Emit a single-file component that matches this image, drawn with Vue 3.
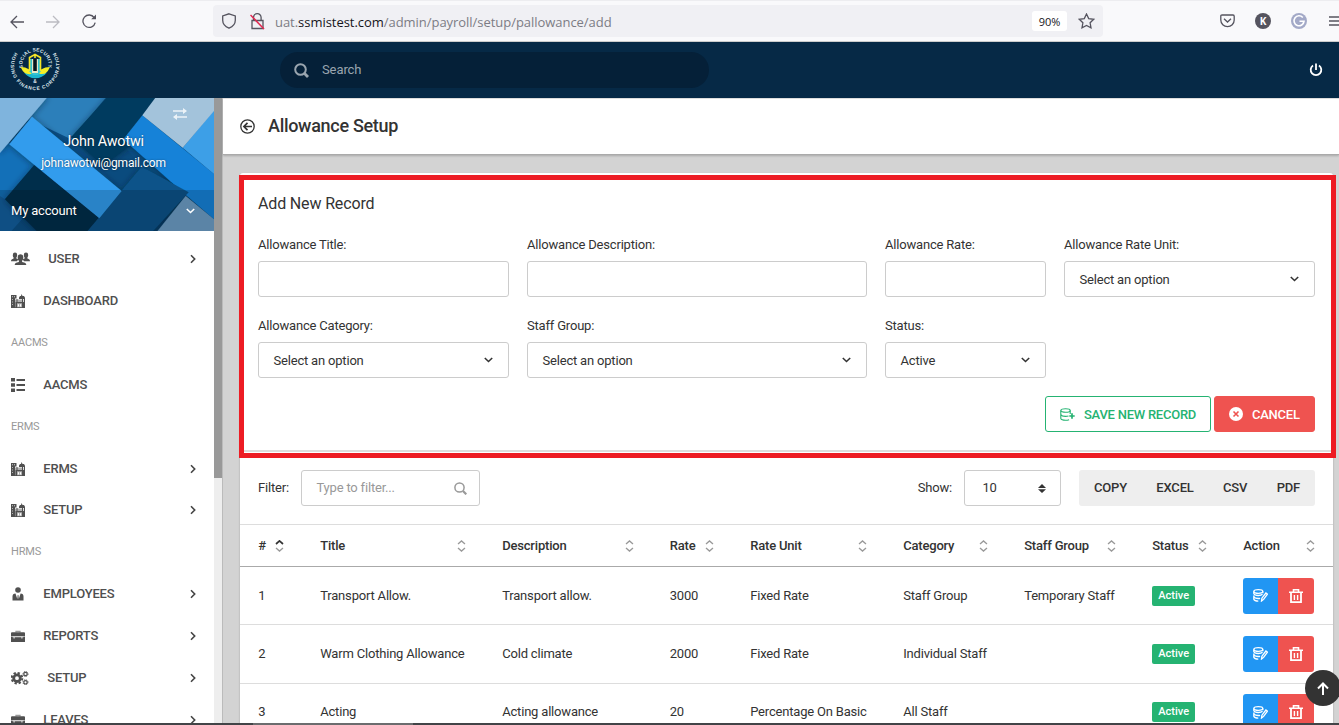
<script setup>
const nav = [
  { label: 'USER', icon: 'users', w: 20, arrow: true },
  { label: 'DASHBOARD', icon: 'city', w: 14 },
  { header: 'AACMS' },
  { label: 'AACMS', icon: 'list', w: 14 },
  { header: 'ERMS' },
  { label: 'ERMS', icon: 'city', w: 14, arrow: true },
  { label: 'SETUP', icon: 'city', w: 14, arrow: true },
  { header: 'HRMS' },
  { label: 'EMPLOYEES', icon: 'tie', w: 14, arrow: true },
  { label: 'REPORTS', icon: 'case', w: 14, arrow: true },
  { label: 'SETUP', icon: 'cogs', w: 18, arrow: true },
  { label: 'LEAVES', icon: 'case', w: 14, arrow: true },
]
const fields = [
  { label: 'Allowance Title:' },
  { label: 'Allowance Description:' },
  { label: 'Allowance Rate:' },
  { label: 'Allowance Rate Unit:', value: 'Select an option' },
  { label: 'Allowance Category:', value: 'Select an option' },
  { label: 'Staff Group:', value: 'Select an option' },
  { label: 'Status:', value: 'Active' },
]
const columns = ['#', 'Title', 'Description', 'Rate', 'Rate Unit', 'Category', 'Staff Group', 'Status', 'Action']
const rows = [
  ['1', 'Transport Allow.', 'Transport allow.', '3000', 'Fixed Rate', 'Staff Group', 'Temporary Staff'],
  ['2', 'Warm Clothing Allowance', 'Cold climate', '2000', 'Fixed Rate', 'Individual Staff', ''],
  ['3', 'Acting', 'Acting allowance', '20', 'Percentage On Basic', 'All Staff', ''],
]
</script>

<template>
  <div class="screen">
    <header class="browser">
      <div class="controls">
        <svg width="14" height="14" viewBox="0 0 14 14" class="line"><path d="M14 7H1M7 1 1 7l6 6" /></svg>
        <svg width="14" height="14" viewBox="0 0 14 14" class="line faded"><path d="M0 7h13M7 1l6 6-6 6" /></svg>
        <svg width="15" height="15" viewBox="0 0 15 15" class="line"><path d="M13.2 8.600A6.200 6.200 0 1 1 12.200 3.600" /><path d="M14 .5V5.300H9.200z" class="solid" /></svg>
      </div>
      <div class="address">
        <svg width="14" height="16" viewBox="0 0 14 16" class="line shield"><path d="M7 .8 13.300 3v4.200c0 3.600-2.600 6.400-6.300 8C3.300 13.600.7 10.800.7 7.200V3z" /></svg>
        <svg width="15" height="17" viewBox="0 0 15 17" class="line lock"><path d="M3.500 7.500V4.500a3.800 3.800 0 0 1 7.600 0v3M2 7.500h11v8H2z" /><path d="M.5 2 14 16" class="slash" /></svg>
        <span class="url">uat.<b>ssmistest.com</b>/admin/payroll/setup/pallowance/add</span>
        <span class="zoom">90%</span>
        <svg width="17" height="16" viewBox="0 0 17 16" class="line star"><path d="M8.500 1l2.200 4.600 5 .7-3.600 3.500.9 5-4.500-2.400L4 14.800l.9-5L1.300 6.300l5-.7z" /></svg>
      </div>
      <div class="addons">
        <svg width="15" height="14" viewBox="0 0 15 14" class="line pocket"><path d="M2 1h11q1.200 0 1.200 1.200V6A6.700 6.700 0 0 1 .8 6V2.200Q.8 1 2 1zM4 4.800l3.500 3.200L11 4.800" /></svg>
        <span class="avatar">K</span>
        <svg width="16" height="16" viewBox="0 0 16 16" class="grammar"><circle cx="8" cy="8" r="8" /><path d="M11.800 4.500A5 5 0 1 0 13 8.300H8.500M13 8.300l-1.200 3" /></svg>
        <svg width="14" height="12" viewBox="0 0 14 12" class="line burger"><path d="M0 2h14M0 6h14M0 10h14" /></svg>
      </div>
    </header>

    <div class="topbar">
      <svg class="logo" width="52" height="48" viewBox="9 44 52 48">
        <defs>
          <path id="ringOuter" d="M15.500 51.500A24.300 24.300 0 1 0 54.800 51.500" />
          <path id="ringInner" d="M23 68A13 13 0 1 1 48 68" />
        </defs>
        <text class="ring"><textPath href="#ringOuter" textLength="104" startOffset="1">HOUSING FINANCE CORPORATION</textPath></text>
        <text class="ring"><textPath href="#ringInner" textLength="47" startOffset="0">SOCIAL SECURITY</textPath></text>
        <path d="M20.500 67q10 0 13.500 8.500Q25 77 20.500 67zM50 67q-10 0-14 8.500Q46 77 50 67z" fill="#f5ee26" />
        <path d="M24 72.500q5 3 8 1l3 1.500 4-1.500q4 1.500 8-1-4.500 5.800-12 5.800-6.500 0-11-5.800z" fill="#1cb5cf" />
        <path d="M29 59h12v12l-3 4h-5l-4-4z" fill="#35c3d4" />
        <path d="M29.500 71V57.500l5.500-3 5.500 3V71M35 54v4" fill="none" stroke="#f5e527" stroke-width="1.600" />
        <path d="M32 59h6v14h-6z" fill="#e6e6c8" /><path d="M33.200 59h3.600v12h-3.600z" fill="#08151f" />
        <text x="33.300" y="83" class="ring">&amp;</text>
      </svg>
      <div class="search">
        <svg width="15" height="15" viewBox="0 0 15 15"><circle cx="6.500" cy="6.500" r="5.300" fill="none" stroke="currentColor" stroke-width="2" /><path d="M10.300 10.300 14 14" stroke="currentColor" stroke-width="2.800" /></svg>
        <span>Search</span>
      </div>
      <svg class="power" width="14" height="14" viewBox="0 0 14 14"><path d="M4 2.500a5.300 5.300 0 1 0 6 0M7 .5v6.500" fill="none" stroke="currentColor" stroke-width="1.800" /></svg>
    </div>

    <div class="body">
      <aside class="sidebar">
        <div class="profile">
          <svg class="backdrop" width="214" height="133" viewBox="0 6 642 399" preserveAspectRatio="none">
            <defs><filter id="soft" x="-20%" y="-20%" width="140%" height="140%"><feDropShadow dx="0" dy="2" stdDeviation="9" flood-color="#001a30" flood-opacity=".55" /></filter></defs>
            <path fill="#0b4f85" d="M0 0h642v410H0z" />
            <path fill="#2c7fba" d="M120-10h210L213 130l-125-60z" />
            <path fill="#1370b8" d="M0 120l110 80L10 315 0 320z" />
            <path fill="#125f9e" d="M0 300l15 10 55 55-40 45H0z" />
            <path fill="#0a4b7e" d="M213 120l150 20 70 80-68 70z" />
            <g filter="url(#soft)">
              <path fill="#063a5f" d="M325 0h150L372 130l18 20-80 60-97-86z" />
              <path fill="#052d4c" d="M102 208L15 310l110 110h240z" />
              <path fill="#1382d8" d="M427 58l215 176v136l-87-75-185-165z" />
              <path fill="#3d9fe7" d="M642 43v191l-94-79z" />
              <path fill="#a3c3db" d="M470 0h172v45l-94 110-121-97z" />
              <path fill="#0a5389" d="M425 212l141 77-115 125H255z" />
              <path fill="#6d9ec6" d="M557 300l85 70v45H465z" />
              <path fill="#339ced" d="M96 62l269 223-67 82L28 145z" />
              <path fill="#7fb4dd" d="M-5 0h150L0 171z" />
            </g>
          </svg>
          <svg class="swap" width="14" height="12" viewBox="0 0 14 12"><path d="M0 3h11M14 9H3" stroke="currentColor" stroke-width="1.700" /><path d="M10 0l4 3-4 3zM4 6 0 9l4 3z" fill="currentColor" /></svg>
          <div class="name">John Awotwi</div>
          <div class="mail">johnawotwi@gmail.com</div>
          <div class="account"><span>My account</span><svg width="9" height="6" viewBox="0 0 9 6" class="chev"><path d="M.8 1l3.700 3.500L8.200 1" /></svg></div>
        </div>
        <nav>
          <div v-for="(n, i) in nav" :key="i" class="item" :class="{ heading: n.header }">
            <template v-if="n.header">{{ n.header }}</template>
            <template v-else>
              <svg v-if="n.icon === 'users'" class="ico" width="19" height="14" viewBox="0 0 19 14"><path d="M1.800 3a2.200 2.400 0 0 1 4.400 0c0 1.300-.4 2-.8 2.500v1l2 .9-1.500 1.800H0c0-1.700 1-2.200 2.600-2.700v-1C2 5 1.800 4.200 1.800 3zM12.800 3a2.200 2.400 0 0 1 4.400 0c0 1.300-.4 2-.8 2.500v1c1.700.5 2.600 1 2.600 2.700h-5.900l-1.500-1.800 2-.9v-1c-.5-.5-.8-1.300-.8-2.500z" /><path d="M6.700 5.400a2.800 3.200 0 0 1 5.600 0c0 1.800-.6 2.800-1.200 3.400v1.100c3 .5 4.200 1.300 4.200 3.100H3.700c0-1.800 1.200-2.600 4.200-3.100V8.800c-.7-.6-1.200-1.600-1.200-3.400z" /></svg>
              <svg v-else-if="n.icon === 'city'" class="ico" width="14" height="14" viewBox="0 0 14 14"><path d="M0 1h5.500v3.500H4V14H0z" /><path d="M1 2.300h1v1H1zM3 2.300h1v1H3zM1 5h.8v1H1zM1 7.500h.8v1H1zM1 10h.8v1H1z" fill="#ccc" /><path d="M8 3.500 9 2h1l.6-2 .9 2h1.500l1 1.700V14h-1V5H8z" /><path d="M4 5.500h8.500V14H4z" opacity=".45" /><path d="M5.500 5h1v3h4.500V5h1v3h1v6h-2V9.200H6V14H4.500V8h1z" /><path d="M7 10.300h1v2.200H7zM9 10.300h1v2.200H9z" fill="#fff" /><path d="M4 13.200h10v.8H4z" /></svg>
              <svg v-else-if="n.icon === 'list'" class="ico" width="14" height="14" viewBox="0 0 14 14"><path d="M0 0h4v3.500H0zM0 5.200h4v3.500H0zM0 10.500h4V14H0zM5.500 1H14v2H5.500zM5.500 6H14v2H5.500zM5.500 11H14v2H5.500z" /></svg>
              <svg v-else-if="n.icon === 'tie'" class="ico" width="14" height="14" viewBox="0 0 14 14"><circle cx="7" cy="3" r="2.800" /><path d="M4.500 6.500 6.300 12l.4-4h.7l.4 4 1.800-5.500q2.900.2 2.900 3V13.500h-11V9.500q0-2.800 3-3z" /></svg>
              <svg v-else-if="n.icon === 'case'" class="ico" width="14" height="14" viewBox="0 0 14 14"><path d="M5 3.500V2.300h4v1.200" fill="none" stroke="#999" stroke-width="1.300" /><path d="M1 3.300h12q1 0 1 1V7.600H0V4.300q0-1 1-1zM0 8h14v5H0z" /><path d="M1.500 7.300h11v1h-1v1.200h-1.200V8.300H3.700v1.200H2.500V8.300h-1z" fill="#ddd" /></svg>
              <svg v-else class="ico" width="18" height="14" viewBox="0 0 18 14"><circle cx="6" cy="7.200" r="3.300" fill="none" stroke="#505050" stroke-width="2.800" /><circle cx="6" cy="7.200" r="5.300" fill="none" stroke="#505050" stroke-width="2" stroke-dasharray="2.300 1.860" /><g fill="none" stroke="#505050"><circle cx="14.500" cy="3" r="1.700" stroke-width="1.200" /><circle cx="14.500" cy="3" r="2.500" stroke-width="1" stroke-dasharray="1.100 .86" /><circle cx="14.500" cy="11.300" r="1.700" stroke-width="1.200" /><circle cx="14.500" cy="11.300" r="2.500" stroke-width="1" stroke-dasharray="1.100 .86" /></g></svg>
              <span class="label">{{ n.label }}</span>
              <svg v-if="n.arrow" width="6" height="10" viewBox="0 0 6 10" class="chev"><path d="M1 1.300 4.700 5 1 8.700" /></svg>
            </template>
          </div>
        </nav>
      </aside>
      <div class="rail"><div class="thumb"></div></div>

      <main>
        <div class="pagehead">
          <svg width="15" height="15" viewBox="0 0 15 15" fill="none" stroke="#333"><circle cx="7.500" cy="7.500" r="6.700" stroke-width="1.300" /><path d="M12 7.500H4M7.500 3.800 3.900 7.500l3.600 3.700" stroke-width="1.700" /></svg>
          <h1>Allowance Setup</h1>
        </div>
        <div class="card">
          <section class="form">
            <h2>Add New Record</h2>
            <div class="grid">
              <div v-for="f in fields" :key="f.label" class="field">
                <label>{{ f.label }}</label>
                <div class="control"><template v-if="f.value"><span>{{ f.value }}</span><svg width="9" height="6" viewBox="0 0 9 6" class="chev"><path d="M.8 1l3.700 3.500L8.200 1" /></svg></template></div>
              </div>
            </div>
            <div class="actions">
              <button class="save"><svg width="15" height="13" viewBox="0 0 15 13" fill="none" stroke="currentColor" stroke-width="1.100"><ellipse cx="5.500" cy="2.500" rx="4.700" ry="1.800" /><path d="M.8 2.500v8q.7 1.800 4.700 1.800 2 0 3.600-.6M.8 6.500q1 1.900 4.700 1.900 1.700 0 3-.4M10.200 2.500v3.500" /><path d="M9.300 8h5.400M12 5.300v5.400" stroke-width="1.700" /></svg><span>SAVE NEW RECORD</span></button>
              <button class="cancel"><svg width="14" height="14" viewBox="0 0 14 14"><circle cx="7" cy="7" r="7" fill="#fff" /><path d="M4.500 4.500l5 5M9.500 4.500l-5 5" stroke="#ef5350" stroke-width="1.600" /></svg><span>CANCEL</span></button>
            </div>
          </section>
          <section class="tools">
            <span class="caption">Filter:</span>
            <div class="control filter"><span>Type to filter...</span><svg width="13" height="13" viewBox="0 0 13 13"><circle cx="5.500" cy="5.500" r="4.600" fill="none" stroke="currentColor" stroke-width="1.500" /><path d="M9 9l3.300 3.300" stroke="currentColor" stroke-width="2.200" /></svg></div>
            <span class="show">Show:</span>
            <div class="control count"><span>10</span><svg width="8" height="9" viewBox="0 0 8 9"><path d="M0 4l4-4 4 4zM0 5.200h8L4 9z" fill="#333" /></svg></div>
            <div class="exports"><span>COPY</span><span>EXCEL</span><span>CSV</span><span>PDF</span></div>
          </section>
          <div class="table">
            <div class="tr head">
              <div v-for="(c, i) in columns" :key="c" class="th">{{ c }}<svg width="9" height="12" viewBox="0 0 9 12" :class="{ sorted: i === 0 }"><path d="M1 4 4.500.9 8 4" /><path d="M1 8l3.500 3.100L8 8" class="down" /></svg></div>
            </div>
            <div v-for="r in rows" :key="r[0]" class="tr">
              <div v-for="(c, i) in r" :key="i">{{ c }}</div>
              <div><span class="badge">Active</span></div>
              <div class="pair">
                <span class="edit"><svg width="15" height="13" viewBox="0 0 15 13" fill="none" stroke="#fff" stroke-width="1.300"><ellipse cx="5.300" cy="2.500" rx="4.500" ry="1.800" /><path d="M.8 2.500v2q.7 2 4.500 2 3 0 4.200-1.200M.8 6.500v3.800q.7 1.900 4.500 1.900M.8 7.500q.7 2 4.500 2 1 0 1.800-.2M9.800 2.500v1.800M8.500 12l.4-2.800 4-5.200 1.500 1.200-3.800 5.200z" /></svg></span>
                <span class="del"><svg width="14" height="14" viewBox="0 0 14 14" fill="none" stroke="#fff"><path d="M0 3.300h14M4.500 3V.8h5V3" stroke-width="1.600" /><path d="M2 4v9.200h10V4" stroke-width="1.800" /><path d="M5.400 6v5M8.600 6v5" stroke-width="1.400" /></svg></span>
              </div>
            </div>
          </div>
        </div>
      </main>
    </div>
    <div class="highlight"></div>
    <div class="totop"><svg width="12" height="13" viewBox="0 0 12 13" fill="none" stroke="#fff" stroke-width="2"><path d="M6 13V1.800M1 6.500l5-5 5 5" /></svg></div>
    <div class="strip"><i></i></div>
  </div>
</template>

<style>
html, body { margin: 0; overflow: hidden; }
</style>
<style scoped>
* { box-sizing: border-box; }
.screen { position: relative; width: 1339px; height: 725px; overflow: hidden; display: flex; flex-direction: column; font: 13px/20px Roboto, sans-serif; letter-spacing: -.19px; color: #333; background: #d3d3d3; }
svg { flex: none; display: block; }
.browser { flex: none; height: 42px; background: #f9f9fb; border-top: 1px solid #ededf0; border-bottom: 1px solid #ccc; display: flex; align-items: center; letter-spacing: 0; }
.line { fill: none; stroke: #55545f; stroke-width: 1.300; }
.line .solid { fill: #55545f; stroke: none; }
.faded { stroke: #bcbcc2; }
.controls { flex: none; width: 213px; padding: 1px 0 0 10px; display: flex; gap: 22px; align-items: center; }
.address { flex: none; width: 890px; height: 32px; border-radius: 4px; background: #f0f0f4; display: flex; align-items: center; padding-left: 9px; font-family: "Open Sans", "Noto Sans", sans-serif; }
.lock { margin-left: 14px; }
.lock .slash { stroke: #e22850; stroke-width: 1.500; }
.url { margin-left: 10px; color: #7c7c84; font-size: 13px; letter-spacing: -.04px; padding-top: 1px; flex: 1; white-space: nowrap; }
.url b { font-weight: 400; color: #15141a; }
.zoom { width: 35px; height: 20px; border-radius: 3px; background: #fff; color: #15141a; font-size: 11px; line-height: 22px; text-align: center; }
.star { margin: 0 8px 0 11px; }
.addons { flex: 1; min-width: 0; display: flex; align-items: center; padding-left: 117px; overflow: hidden; }
.avatar { margin: 0 20px 0 20px; width: 16px; height: 16px; flex: none; border-radius: 8px; background: #55545f; color: #fff; font: bold 10px/16px "Open Sans", sans-serif; text-align: center; }
.grammar circle { fill: #a3a9c7; }
.grammar path { fill: none; stroke: #fff; stroke-width: 1.600; }
.burger { margin-left: 22px; }
.topbar { flex: none; height: 56px; background: #062946; display: flex; align-items: center; padding: 0 16px 0 9px; color: #fff; }
.logo { margin-top: -4px; }
.ring { font: bold 4.800px "Liberation Sans", sans-serif; letter-spacing: 0; fill: #dfe8ee; }
.search { margin-left: 219px; width: 429px; height: 36px; border-radius: 18px; background: #052038; display: flex; align-items: center; padding-left: 14px; gap: 13px; color: #9aa5af; letter-spacing: -.1px; }
.power { margin-left: auto; }
.body { flex: 1; display: flex; min-height: 0; }
.sidebar { width: 214px; background: #fff; overflow: hidden; }
.profile { position: relative; height: 133px; color: #fff; text-align: center; text-shadow: 0 0 2px rgba(0, 0, 0, .5); }
.backdrop { position: absolute; inset: 0; }
.swap { position: absolute; left: 173px; top: 10px; opacity: .8; }
.name { position: relative; padding: 34px 7px 0 0; font-size: 14.400px; line-height: 20px; }
.mail { position: relative; padding: 1px 7px 0 0; font-size: 12px; }
.account { position: absolute; left: 0; right: 0; bottom: 0; height: 41px; background: rgba(0, 0, 0, .16); display: flex; align-items: center; justify-content: space-between; padding: 0 19px 0 11px; }
.chev { fill: none; stroke: currentColor; stroke-width: 1.600; }
nav { padding-top: 7.500px; }
.item { height: 41.830px; display: flex; align-items: center; padding: 0 18.500px 0 11px; font-weight: 500; color: #4f4f4f; }
.item .chev { margin-left: auto; color: #444; }
.ico { fill: #505050; }
.label { margin-left: 18.300px; }
.heading { font-weight: 400; font-size: 11px; color: #999; }
.rail { width: 8px; background: #eee; }
.thumb { height: 380px; background: #999; }
main { flex: 1; min-width: 0; border-left: 1px solid #bbb; }
.pagehead { height: 57px; background: #fff; border-bottom: 1px solid #aaa; border-top: 1px solid #ddd; box-shadow: 0 1px 2px rgba(0, 0, 0, .2); display: flex; align-items: center; padding-left: 17px; gap: 13px; }
h1 { margin: -2px 0 0; font-size: 18px; font-weight: 500; line-height: 24px; letter-spacing: -.3px; }
.card { margin: 18px 6px 0 17px; background: #fff; border-radius: 3px; box-shadow: 0 1px 2px rgba(0, 0, 0, .25); }
.form { height: 279px; padding: 21px 18px 0; border-bottom: 2px solid #ddd; }
h2 { margin: 0 0 21px; font-size: 16px; font-weight: 400; line-height: 20px; letter-spacing: -.15px; }
.grid { display: grid; grid-template-columns: 251px 340px 161px 251px; gap: 18px; }
.field { height: 63px; }
label { display: block; height: 26px; line-height: 20px; }
.field .control { margin-bottom: 1px; }
.control { height: 36px; border: 1px solid #ccc; border-radius: 3px; display: flex; align-items: center; justify-content: space-between; padding: 0 15px 0 14.500px; background: #fff; }
.field .control span, button span { padding-top: 2px; }
.actions { margin-top: 17px; display: flex; justify-content: flex-end; gap: 3px; }
button { height: 36px; font: 500 13px/20px Roboto, sans-serif; letter-spacing: -.25px; border-radius: 3px; display: flex; align-items: center; padding: 0 14px; white-space: nowrap; }
.save { width: 166px; gap: 9px; color: #25b372; border: 1px solid #25b372; background: #fff; }
.cancel { width: 101px; gap: 9px; color: #fff; border: 1px solid #ef5350; background: #ef5350; }
.tools { height: 72px; padding: 0 18px; display: flex; align-items: center; }
.caption { width: 31px; }
.filter { width: 179px; margin-left: 12px; color: #999; padding-right: 12px; }
.show { margin-left: auto; }
.count { width: 97px; margin: 0 18px 0 12px; padding-left: 17.500px; padding-right: 14px; }
.exports { width: 236px; height: 36px; border-radius: 3px; background: #eee; display: flex; align-items: center; justify-content: space-between; padding: 0 15px; font-weight: 500; }
.tr { display: grid; grid-template-columns: 62px 182px 167.500px 80.500px 153px 121px 128px 91px 108px; height: 58.300px; align-items: center; border-bottom: 1px solid #ddd; }
.tr > div { padding-left: 18.200px; white-space: nowrap; }
.head { height: 43px; border-top: 1px solid #ddd; border-bottom-color: #aaa; font-weight: 500; }
.tr > .th { display: flex; align-items: center; justify-content: space-between; padding-right: 18px; }
.th path { fill: none; stroke: #999; stroke-width: 1.300; }
.th .sorted path:first-child { stroke: #333; stroke-width: 1.700; }
.badge { display: block; width: 43px; height: 20px; border-radius: 2px; background: #25b372; color: #fff; font-size: 11px; font-weight: 500; line-height: 20px; text-align: center; letter-spacing: 0; }
.tr > .pair { display: flex; }
.pair span { height: 36px; display: flex; align-items: center; justify-content: center; }
.edit { width: 35px; background: #2196f3; border-radius: 3px 0 0 3px; }
.del { width: 36px; background: #ef5350; border-radius: 0 3px 3px 0; }
.highlight { position: absolute; left: 239px; top: 175px; width: 1097px; height: 283px; border: 5px solid #ed1c24; }
.totop { position: absolute; left: 1305px; top: 670px; width: 36px; height: 36px; border-radius: 18px; background: #333; display: flex; align-items: center; justify-content: center; }
.strip { position: absolute; left: 0; right: 0; bottom: 0; height: 2px; background: #424447; }
.strip i { display: block; width: 160px; height: 2px; margin-left: 253px; background: #6b6c6e; }
</style>
